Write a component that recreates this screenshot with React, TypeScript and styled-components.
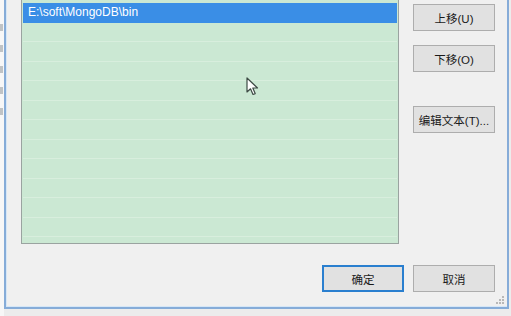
import styled, { createGlobalStyle } from 'styled-components'

const GlobalStyle = createGlobalStyle`
  html, body {
    margin: 0;
    padding: 0;
    background: #ececec;
  }
  * {
    box-sizing: border-box;
  }
`

const Screen = styled.div`
  position: relative;
  width: 511px;
  height: 316px;
  overflow: hidden;
  display: grid;
  grid-template-columns: 4px 1fr;
  font-family: 'Segoe UI', 'Liberation Sans', 'Noto Sans CJK SC', sans-serif;
  font-size: 12px;
  color: #000;
`

const BackWindow = styled.div`
  background: #f7f7f7;
  display: flex;
  flex-direction: column;
  gap: 14px;
  padding-top: 24px;
  span {
    display: block;
    width: 3px;
    height: 7px;
    background: #8a8f94;
    opacity: 0.5;
  }
`

const Column = styled.div`
  display: flex;
  flex-direction: column;
  background: #ececec;
`

const Dialog = styled.div`
  height: 309px;
  width: 505px;
  background: #f0f0f0;
  border-left: 2px solid #86acd8;
  border-right: 2px solid #86acd8;
  border-bottom: 2px solid #86acd8;
  box-shadow: inset 1px 0 0 #d6e7f7, inset 0 -1px 0 #d6e7f7;
  padding: 0 12px 0 15px;
  display: grid;
  grid-template-columns: 378px 82px;
  grid-template-rows: 244px 1fr;
  column-gap: 14px;
  position: relative;
`

const ListBox = styled.div`
  margin-top: -1px;
  border: 1px solid #9aa3a0;
  background: #cbe8d3;
  padding: 3px 1px 0 1px;
  display: flex;
  flex-direction: column;
  overflow: hidden;
`

const Row = styled.div<{ $selected?: boolean }>`
  height: 19.5px;
  flex: none;
  display: flex;
  align-items: center;
  padding-left: 5px;
  color: ${({ $selected }) => ($selected ? '#ffffff' : '#000')};
  background: ${({ $selected }) => ($selected ? '#3a8ee6' : 'transparent')};
  border-bottom: 1px solid ${({ $selected }) => ($selected ? '#3a8ee6' : '#d8eedd')};
  white-space: nowrap;
`

const SideButtons = styled.div`
  display: flex;
  flex-direction: column;
  padding-top: 4px;
`

const Button = styled.button<{ $default?: boolean; $gap?: number }>`
  width: 82px;
  height: 27px;
  margin-top: ${({ $gap }) => $gap ?? 0}px;
  background: #e1e1e1;
  border: 1px solid ${({ $default }) => ($default ? '#2a7fcf' : '#adadad')};
  box-shadow: ${({ $default }) => ($default ? 'inset 0 0 0 1px #2a7fcf' : 'none')};
  font-family: 'Segoe UI', 'Liberation Sans', 'Noto Sans CJK SC', sans-serif;
  font-size: 11.5px;
  color: #1a1a1a;
  padding: 0;
  display: flex;
  align-items: center;
  justify-content: center;
`

const Footer = styled.div`
  grid-column: 1 / 3;
  display: flex;
  justify-content: flex-end;
  align-items: flex-start;
  gap: 9px;
  padding-top: 21px;
`

const Grip = styled.svg`
  position: absolute;
  right: 2px;
  bottom: 2px;
`

const Cursor = styled.svg`
  position: absolute;
  left: 246px;
  top: 77px;
`

export default function App() {
  const rows = Array.from({ length: 12 }, (_, i) => i)
  return (
    <>
      <GlobalStyle />
      <Screen>
        <BackWindow>
          <span />
          <span />
          <span />
          <span />
          <span />
        </BackWindow>
        <Column>
          <Dialog>
            <ListBox>
              {rows.map((i) => (
                <Row key={i} $selected={i === 0}>
                  {i === 0 ? 'E:\\soft\\MongoDB\\bin' : ''}
                </Row>
              ))}
            </ListBox>
            <SideButtons>
              <Button>上移(U)</Button>
              <Button $gap={14}>下移(O)</Button>
              <Button $gap={34}>编辑文本(T)...</Button>
            </SideButtons>
            <Footer>
              <Button $default>确定</Button>
              <Button>取消</Button>
            </Footer>
            <Grip width="10" height="10" viewBox="0 0 10 10">
              <rect x="7" y="1" width="2" height="2" fill="#b8b8b8" />
              <rect x="4" y="4" width="2" height="2" fill="#b8b8b8" />
              <rect x="7" y="4" width="2" height="2" fill="#b8b8b8" />
              <rect x="1" y="7" width="2" height="2" fill="#b8b8b8" />
              <rect x="4" y="7" width="2" height="2" fill="#b8b8b8" />
              <rect x="7" y="7" width="2" height="2" fill="#b8b8b8" />
            </Grip>
          </Dialog>
        </Column>
        <Cursor width="14" height="20" viewBox="0 0 14 20">
          <path
            d="M1 1 L1 15 L4.5 11.8 L7 17.5 L9.2 16.6 L6.8 11 L11.5 11 Z"
            fill="#ffffff"
            stroke="#3d4a44"
            strokeWidth="1.2"
            strokeLinejoin="round"
          />
        </Cursor>
      </Screen>
    </>
  )
}
